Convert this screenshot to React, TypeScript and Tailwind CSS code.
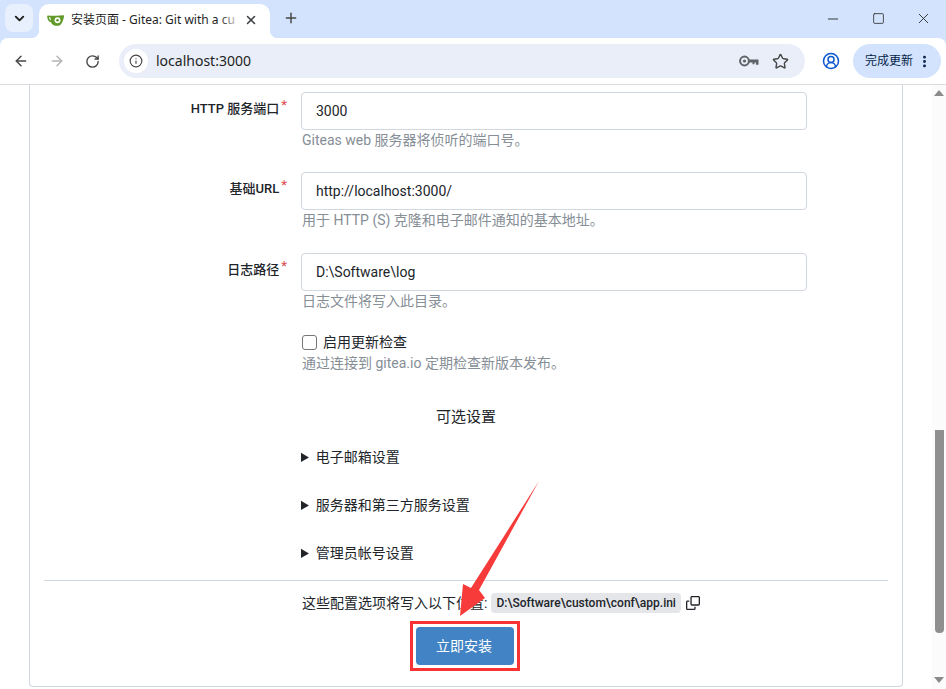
import { ArrowLeft, ArrowRight, ChevronDown, CircleUserRound, Info, Minus, MoreVertical, Plus, RotateCw, Square, Star, X } from 'lucide-react';

function GiteaIcon() {
  return (
    <svg width="18" height="14" viewBox="0 0 18 14">
      <path d="M1 2.5c3 .3 6 .3 15.5-.3.5 0 .7.3.6.8-.5 3-1.6 7-3.6 8.8-.6.6-1.4.9-2.3.9H8.5C6 12.7 4.8 11 4 9.3 2 9 .2 7 .2 3.5c0-.6.3-1 .8-1Z" fill="#609926" />
      <path d="M2 4.2c.2 1.8 1 3 2 3.4-.3-1.2-.5-2.3-.6-3.4H2Z" fill="#fff" />
      <circle cx="10.5" cy="7.3" r="3" fill="#fff" />
      <circle cx="10.5" cy="7.3" r="1.3" fill="#609926" />
    </svg>
  );
}

function KeyIcon() {
  return (
    <svg width="20" height="12" viewBox="0 0 20 12" fill="none">
      <circle cx="5.5" cy="6" r="4.4" stroke="#5f6368" strokeWidth="2" />
      <circle cx="5.5" cy="6" r="1.6" fill="#5f6368" />
      <path d="M10 4.4H19.5v5.4h-2.6V7.6h-1.4v1.6h-2V7.6H10Z" fill="#5f6368" />
    </svg>
  );
}

function CopyIcon() {
  return (
    <svg width="14" height="14" viewBox="0 0 16 16" fill="#212529">
      <path d="M0 6.75C0 5.784.784 5 1.75 5h1.5a.75.75 0 0 1 0 1.5h-1.5a.25.25 0 0 0-.25.25v7.5c0 .138.112.25.25.25h7.5a.25.25 0 0 0 .25-.25v-1.5a.75.75 0 0 1 1.5 0v1.5A1.75 1.75 0 0 1 9.25 16h-7.5A1.75 1.75 0 0 1 0 14.25Z" />
      <path d="M5 1.75C5 .784 5.784 0 6.75 0h7.5C15.216 0 16 .784 16 1.75v7.5A1.75 1.75 0 0 1 14.25 11h-7.5A1.75 1.75 0 0 1 5 9.25Zm1.75-.25a.25.25 0 0 0-.25.25v7.5c0 .138.112.25.25.25h7.5a.25.25 0 0 0 .25-.25v-7.5a.25.25 0 0 0-.25-.25Z" />
    </svg>
  );
}

function TabStrip() {
  return (
    <div className="flex h-[38px] shrink-0 items-end bg-[#d3e3fd]">
      <div className="mb-[6px] ml-[5px] flex h-[28px] w-[28px] items-center justify-center rounded-lg bg-[#e8f0fe]">
        <ChevronDown size={15} strokeWidth={3} className="text-[#1f1f1f]" />
      </div>
      <div className="relative ml-[6px] flex h-[34px] w-[231px] items-center rounded-t-[10px] bg-white pb-[3px] pl-[8px]">
        <div className="absolute -left-[8px] bottom-0 h-[8px] w-[8px] bg-[radial-gradient(circle_at_0_0,transparent_8px,#fff_8.5px)]" />
        <div className="absolute -right-[8px] bottom-0 h-[8px] w-[8px] bg-[radial-gradient(circle_at_100%_0,transparent_8px,#fff_8.5px)]" />
        <GiteaIcon />
        <div className="relative ml-[6px] w-[171px] whitespace-nowrap text-[12px] leading-[16px] text-[#1f1f1f]">
          安装页面 - Gitea: Git with a cu
          <div className="absolute inset-y-0 right-0 w-[22px] bg-gradient-to-r from-transparent to-white" />
        </div>
        <X size={14} strokeWidth={2.6} className="ml-[2px] text-[#3c4043]" />
      </div>
      <div className="mb-[12px] ml-[13px]">
        <Plus size={16} strokeWidth={2.2} className="text-[#474747]" />
      </div>
      <div className="ml-auto mb-[11px] flex items-center text-[#1f1f1f]">
        <Minus size={16} strokeWidth={1.3} />
        <Square size={13} strokeWidth={1.4} className="ml-[31px]" />
        <X size={17} strokeWidth={1.2} className="ml-[30px] mr-[14px]" />
      </div>
    </div>
  );
}

function Toolbar() {
  return (
    <div className="bg-[#d3e3fd]">
      <div className="flex h-[46px] items-center rounded-t-[8px] bg-white">
        <ArrowLeft size={16} strokeWidth={2.2} className="ml-[13px] text-[#474747]" />
        <ArrowRight size={16} strokeWidth={2.2} className="ml-[20px] text-[#b4b4b4]" />
        <RotateCw size={15} strokeWidth={2.2} className="ml-[20px] text-[#474747]" />
        <div className="ml-[19px] flex h-[34px] w-[686px] items-center rounded-full bg-[#e9eef8] pl-[5px] pr-[16px]">
          <div className="flex h-[24px] w-[24px] items-center justify-center rounded-full bg-white">
            <Info size={14} strokeWidth={2} className="text-[#474747]" />
          </div>
          <span className="ml-[8px] text-[14px] leading-[20px] text-[#1f1f1f]">localhost:3000</span>
          <div className="ml-auto">
            <KeyIcon />
          </div>
          <Star size={17} strokeWidth={2} className="ml-[13px] text-[#474747]" />
        </div>
        <CircleUserRound size={18} strokeWidth={2} className="ml-[17px] text-[#0b57d0]" />
        <div className="ml-[13px] flex h-[34px] w-[88px] items-center rounded-full bg-[#d3e3fd] pl-[12px]">
          <span className="text-[12px] leading-[16px] text-[#041e49]">完成更新</span>
          <MoreVertical size={15} strokeWidth={2.6} className="ml-[4px] text-[#041e49]" />
        </div>
      </div>
    </div>
  );
}

function FormRow({ label, value, help, gap }: { label: string; value: string; help: string; gap: string }) {
  return (
    <div className={`flex ${gap}`}>
      <div className="w-[243px] pt-[7px] text-right text-[13px] font-medium leading-[20px] text-[#212529]">
        {label}
        <span className="relative -top-[4px] ml-[2px] text-[#e0555a]">*</span>
      </div>
      <div className="ml-[14px] w-[506px]">
        <div className="flex h-[38px] items-center rounded-[4px] border border-[#d0d7de] bg-white px-[14px] text-[14px] text-[#212529]">
          {value}
        </div>
        <p className="h-[20px] pl-[1px] text-[14px] leading-[20px] text-[#868e96]">{help}</p>
      </div>
    </div>
  );
}

function Scrollbar() {
  return (
    <div className="flex w-[14px] shrink-0 flex-col items-center bg-[#fbfbfb]">
      <div className="mt-[5px] h-0 w-0 border-x-[5px] border-b-[6px] border-x-transparent border-b-[#8a8a8a]" />
      <div className="mt-[334px] h-[203px] w-[9px] rounded-b-[4px] bg-[#8f8f8f]" />
      <div className="mt-[44px] h-0 w-0 border-x-[5px] border-t-[6px] border-x-transparent border-t-[#8a8a8a]" />
    </div>
  );
}

export default function App() {
  return (
    <div className='relative flex h-[689px] w-[946px] flex-col overflow-hidden bg-white font-["Noto_Sans","Noto_Sans_CJK_SC",sans-serif]'>
      <TabStrip />
      <Toolbar />
      <div className="flex min-h-0 flex-1 border-t border-[#dadce0]">
        <div className="flex-1 pl-[29px]">
          <div className='h-[602px] w-[874px] rounded-b-[4px] border-x border-b border-[#d0d7de] px-[14px] pt-[7px] font-["Roboto","Noto_Sans_CJK_SC",sans-serif] text-[#212529]'>
            <FormRow label="HTTP 服务端口" value="3000" help="Giteas web 服务器将侦听的端口号。" gap="mb-[22px]" />
            <FormRow label="基础URL" value="http://localhost:3000/" help="用于 HTTP (S) 克隆和电子邮件通知的基本地址。" gap="mb-[23px]" />
            <FormRow label="日志路径" value="D:\Software\log" help="日志文件将写入此目录。" gap="mb-[21px]" />

            <div className="pl-[258px]">
              <label className="flex h-[20px] items-center text-[14px]">
                <span className="h-[15px] w-[15px] rounded-[3px] border border-[#767676] bg-white" />
                <span className="ml-[6px]">启用更新检查</span>
              </label>
              <p className="h-[21px] pt-[1px] text-[14px] leading-[20px] text-[#868e96]">通过连接到 gitea.io 定期检查新版本发布。</p>
            </div>

            <h4 className="mt-[34px] h-[20px] text-center text-[15px] leading-[20px]">可选设置</h4>

            <div className="mt-[20px] flex flex-col gap-[28px] pl-[257px] text-[14px] leading-[20px]">
              <details>
                <summary>电子邮箱设置</summary>
              </details>
              <details>
                <summary>服务器和第三方服务设置</summary>
              </details>
              <details>
                <summary>管理员帐号设置</summary>
              </details>
            </div>

            <div className="mt-[17px] border-t border-[#d0d7de] pt-[12px]">
              <div className="flex h-[20px] items-center pl-[258px] text-[14px]">
                这些配置选项将写入以下位置:
                <span className="ml-[4px] rounded-[4px] bg-[#e4e6e9] px-[5px] text-[12px] font-medium leading-[20px]">
                  D:\Software\custom\conf\app.ini
                </span>
                <span className="ml-[5px]">
                  <CopyIcon />
                </span>
              </div>
              <div className="mt-[8px] flex justify-center">
                <div className="ml-[-2px] border-[3px] border-[#f73333] p-[3px]">
                  <button className="block h-[38px] w-[98px] rounded-[4px] bg-[#4183c4] pr-[2px] text-[14px] text-white">立即安装</button>
                </div>
              </div>
            </div>
          </div>
        </div>
        <Scrollbar />
      </div>
      {/* red annotation arrow drawn over the screenshot */}
      <svg className="pointer-events-none absolute left-0 top-0" width="946" height="689">
        <polygon points="539,481 479,590 485,598 460,616 463,584 471,588" fill="#f73a3a" />
      </svg>
    </div>
  );
}
